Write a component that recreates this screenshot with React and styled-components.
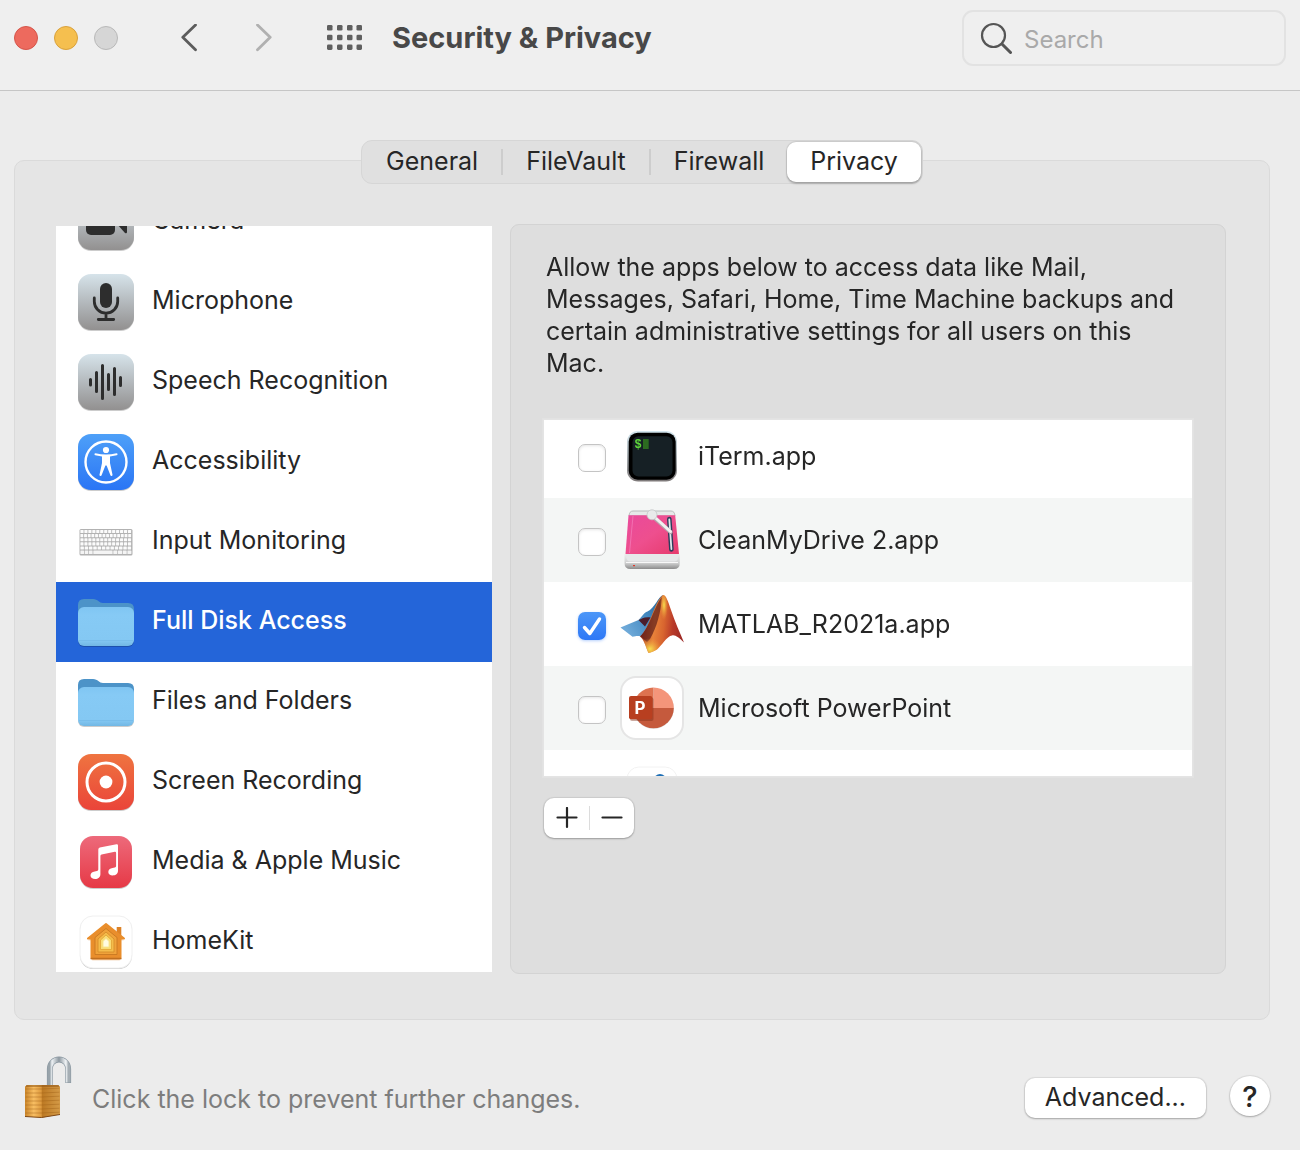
import { useLayoutEffect, useRef, useState } from "react";
import styled, { createGlobalStyle, css } from "styled-components";

const GlobalStyle = createGlobalStyle`
  * {
    box-sizing: border-box;
  }

  body {
    margin: 0;
    background: #ececec;
    color: #262626;
    font-family: Inter, "Liberation Sans", sans-serif;
    font-size: 25px;
  }

  button, input {
    font: inherit;
    color: inherit;
    margin: 0;
  }

  button {
    padding: 0;
    border: none;
    background: none;
  }

  svg {
    display: block;
    flex: none;
  }
`;

const Toolbar = styled.header`
  display: flex;
  align-items: center;
  height: 91px;
  padding: 0 14px 14px;
  background: #efefef;
  border-bottom: 1px solid #c6c6c6;
`;

const Lights = styled.div`
  display: flex;
  gap: 16px;
`;

const Light = styled.button`
  width: 24px;
  height: 24px;
  border-radius: 50%;
  background: ${(props) => props.$color};
  border: 1px solid ${(props) => props.$edge};
`;

const Nav = styled.nav`
  display: flex;
  gap: 35px;
  margin: 0 43px 0 51px;
`;

const NavButton = styled.button`
  display: flex;
  justify-content: center;
  width: 40px;
  color: ${(props) => (props.disabled ? "#b0b0b0" : "#5c5c5c")};
`;

const GridButton = styled.button`
  color: #5f5f5f;
`;

const Title = styled.h1`
  margin: 0 0 0 30px;
  font-size: 29px;
  font-weight: 700;
  line-height: 36px;
  color: #484848;
`;

const SearchBox = styled.label`
  display: flex;
  align-items: center;
  gap: 12px;
  width: 324px;
  height: 56px;
  margin-left: auto;
  padding: 0 16px;
  border: 2px solid #e2e2e2;
  border-radius: 11px;
`;

const SearchInput = styled.input`
  flex: 1;
  min-width: 0;
  padding: 2px 0 0;
  border: none;
  outline: none;
  background: none;
  font-size: 24px;

  &::placeholder {
    color: #a9a9a9;
    opacity: 1;
  }
`;

const Main = styled.main`
  padding: 49px 30px 0 14px;
`;

const Tabs = styled.div`
  position: relative;
  display: flex;
  width: fit-content;
  height: 44px;
  margin: 0 auto -24px;
  padding: 1px;
  background: #e0e0e0;
  border: 1px solid #d6d6d6;
  border-radius: 11px;
`;

const Tab = styled.button`
  display: flex;
  align-items: center;
  height: 40px;
  border-radius: 9px;

  span {
    padding: 0 23px 2px;
    line-height: 24px;
  }

  &:not(:last-child) span {
    border-right: ${(props) => (props.$beforeActive ? "none" : "2px solid #cdcdcd")};
  }

  ${(props) =>
    props.$active &&
    css`
      background: #fff;
      box-shadow: 0 0 1px 1px rgba(0, 0, 0, 0.1), 0 2px 2px rgba(0, 0, 0, 0.2);
    `}
`;

const Pane = styled.section`
  display: flex;
  gap: 18px;
  padding: 63px 43px 45px 41px;
  background: #e5e5e5;
  border: 1px solid #dadada;
  border-radius: 10px;
`;

const Sidebar = styled.ul`
  flex: 0 0 436px;
  height: 746px;
  margin: 2px 0;
  padding: 0;
  list-style: none;
  background: #fff;
  overflow-y: auto;
  scrollbar-width: none;
`;

const Category = styled.button`
  display: flex;
  align-items: center;
  gap: 18px;
  width: 100%;
  height: 80px;
  padding: 0 22px;
  text-align: left;
  background: ${(props) => (props.$active ? "#2465d9" : "transparent")};
  color: ${(props) => (props.$active ? "#fff" : "inherit")};
  font-weight: ${(props) => (props.$active ? 500 : 400)};

  span {
    padding-bottom: 4px;
  }
`;

const Detail = styled.div`
  flex: 1;
  min-width: 0;
  padding: 26px 32px;
  background: #dedede;
  border: 1px solid #d3d3d3;
  border-radius: 9px;
`;

const Description = styled.p`
  margin: 0 0 40px;
  padding-left: 3px;
  line-height: 32px;
`;

const AppList = styled.ul`
  height: 358px;
  margin: 0 0 21px;
  padding: 0;
  list-style: none;
  background: #fff;
  border: 1px solid #e4e4e4;
  box-shadow: 0 0 0 1px #e2e2e2;
  overflow-y: auto;
  scrollbar-width: none;
`;

const AppRow = styled.li`
  display: flex;
  align-items: center;
  height: 84px;
  background: ${(props) => (props.$striped ? "#f4f6f5" : "#fff")};

  label {
    display: flex;
    align-items: center;
    gap: 14px;
    padding-left: 34px;
  }
`;

const CheckCell = styled.span`
  display: grid;
  margin-top: 4px;

  > * {
    grid-area: 1 / 1;
  }

  svg {
    pointer-events: none;
  }
`;

const Checkbox = styled.input`
  appearance: none;
  width: 28px;
  height: 28px;
  background: #fff;
  border: 1px solid #c4c4c4;
  border-radius: 7px;
  box-shadow: inset 0 1px 3px rgba(0, 0, 0, 0.1);

  &:checked {
    background: linear-gradient(#4b96f8, #2e78f6);
    border: none;
    box-shadow: 0 1px 3px rgba(46, 120, 246, 0.35);
  }
`;

const EditButtons = styled.div`
  display: flex;
  align-items: center;
  width: fit-content;
  height: 40px;
  margin-left: 1px;
  background: #fff;
  border-radius: 10px;
  box-shadow: 0 0 1px 1px rgba(0, 0, 0, 0.08), 0 1px 2px rgba(0, 0, 0, 0.25);
`;

const EditButton = styled.button`
  display: flex;
  align-items: center;
  justify-content: center;
  width: 45px;
  height: 24px;

  & + & {
    border-left: 1px solid #dcdcdc;
  }
`;

const Footer = styled.footer`
  display: flex;
  align-items: flex-end;
  gap: 20px;
  padding: 36px 0 32px 10px;
`;

const LockText = styled.span`
  flex: 1;
  line-height: 38px;
  color: #7d7d7d;
`;

const PushButton = styled.button`
  height: 40px;
  padding: 0 20px 2px;
  background: #fff;
  border-radius: 10px;
  box-shadow: 0 0 1px 1px rgba(0, 0, 0, 0.07), 0 1px 2px rgba(0, 0, 0, 0.25);
`;

const HelpButton = styled(PushButton)`
  width: 40px;
  margin: 0 0 2px 4px;
  padding: 0;
  border-radius: 50%;
  font-size: 29px;
  font-weight: 500;
`;

const Glyph = ({ size = 56, children }) => (
  <svg width={size} height={size} viewBox={`0 0 ${size} ${size}`} aria-hidden="true" overflow="visible">
    {children}
  </svg>
);

const Tile = ({ id, from, to, inset = 0, edge = "none" }) => {
  const side = 56 - inset * 2;
  return (
    <>
      <defs>
        <linearGradient id={id} x1="0" y1="0" x2="0" y2="1">
          <stop offset="0" stopColor={from} />
          <stop offset="1" stopColor={to} />
        </linearGradient>
      </defs>
      <rect x={inset} y={inset + 1} width={side} height={side} rx="13" fill="#000" opacity="0.2" />
      <rect x={inset} y={inset} width={side} height={side} rx="13" fill={`url(#${id})`} stroke={edge} />
    </>
  );
};

const CameraIcon = () => (
  <Glyph>
    <Tile id="camera" from="#d6e3ea" to="#929090" />
    <rect x="8" y="16" width="29" height="25" rx="5" fill="#2d2d2d" />
    <path d="M39 30l8-9q2-1 2 1v16q0 2-2 1z" fill="#2d2d2d" />
  </Glyph>
);

const MicrophoneIcon = () => (
  <Glyph>
    <Tile id="mic" from="#d6e3ea" to="#929090" />
    <rect x="22" y="9" width="12" height="25" rx="6" fill="#2d2d2d" />
    <path
      d="M16.3 24v3.5a11.7 11.7 0 0 0 23.4 0V24M28 39.5V45M20.3 45.5h15.4"
      fill="none"
      stroke="#2d2d2d"
      strokeWidth="2.8"
      strokeLinecap="round"
    />
  </Glyph>
);

const SpeechIcon = () => (
  <Glyph>
    <Tile id="speech" from="#d6e3ea" to="#929090" />
    <path
      d="M12.5 25.5v5.5M18.5 18.5v19M24.5 11.5v33M30.5 20.5v15M36.5 14.5v26M42.5 23.5v8"
      stroke="#2d2d2d"
      strokeWidth="3"
      strokeLinecap="round"
    />
  </Glyph>
);

const AccessibilityIcon = () => (
  <Glyph>
    <Tile id="access" from="#4ea0f8" to="#2a75f5" />
    <circle cx="28" cy="28" r="20.5" fill="none" stroke="#fff" strokeWidth="2.4" />
    <circle cx="28" cy="16" r="3.1" fill="#fff" />
    <path
      d="M17.5 19.2q10.5 2.4 21 0q1.2 0 1 1.2q0 .6-.8.8l-6.7 1.3V29l2.5 11.7q.2 1-.8 1.3q-1 .2-1.3-.7L28.6 31.5h-1.2l-3.8 9.8q-.3.9-1.3.7q-1-.3-.8-1.3L24 29v-6.5l-6.7-1.3q-.8-.2-.8-.8q-.2-1.2 1-1.2z"
      fill="#fff"
    />
  </Glyph>
);

const keyRows = [13, 14, 13, 13, 12];
const bottomKeys = [
  [2.4, 3.6],
  [6.7, 3.6],
  [11, 3.6],
  [15.3, 19.3],
  [35.3, 4],
  [40, 4],
  [44.7, 4],
  [49.4, 4],
];

const KeyboardIcon = () => (
  <Glyph>
    <rect x="1.5" y="15" width="53" height="26.5" rx="1.5" fill="#b2b2b2" />
    {keyRows.map((count, row) =>
      Array.from({ length: count }, (_, i) => {
        const step = 51.5 / count;
        return (
          <rect
            key={`${row}-${i}`}
            x={2.4 + i * step}
            y={16 + row * 4.1}
            width={step - 0.8}
            height="3.1"
            rx="0.5"
            fill="#fbfbfb"
          />
        );
      })
    )}
    {bottomKeys.map(([x, width]) => (
      <rect key={x} x={x} y="36.5" width={width} height="3.5" rx="0.5" fill="#f4f4f4" />
    ))}
  </Glyph>
);

const FolderIcon = ({ id }) => (
  <Glyph>
    <defs>
      <linearGradient id={id} x1="0" y1="0" x2="0" y2="1">
        <stop offset="0" stopColor="#7fc5f2" />
        <stop offset="0.2" stopColor="#86caf5" />
        <stop offset="0.85" stopColor="#84c8f3" />
        <stop offset="1" stopColor="#72b7e4" />
      </linearGradient>
    </defs>
    <rect x="0" y="14" width="56" height="39" rx="6" fill="#000" opacity="0.2" />
    <path d="M0 11q0-6 6-6h9c5 0 6 4 10 4h25q6 0 6 6v20H0z" fill="#4c93c8" />
    <rect x="0" y="13" width="56" height="39" rx="6" fill={`url(#${id})`} />
    <path d="M1 46.5h54" stroke="#74b9e6" strokeWidth="0.7" />
  </Glyph>
);

const RecordingIcon = () => (
  <Glyph>
    <Tile id="recording" from="#ef7440" to="#ea4439" />
    <circle cx="28" cy="28" r="19" fill="none" stroke="#fff" strokeWidth="3" />
    <circle cx="28" cy="28" r="6.4" fill="#fff" />
  </Glyph>
);

const MusicIcon = () => (
  <Glyph>
    <Tile id="music" from="#ed6a7b" to="#e63946" inset={2} />
    <path
      d="M20.3 15.5q0-1.5 1.5-1.9l16.7-3.3q1.5-.2 1.5 1.2v25.3c0 3-2.3 4.7-5.3 4.7c-2.6 0-4.4-1.3-4.4-3.4c0-2.3 1.7-3.5 4.2-4l2.3-.5q1.3-.3 1.3-1.7V18.9q0-1.3-1.3-1.1l-13.2 2.7q-1.2.3-1.2 1.5v18.3c0 3-2.3 4.8-5.2 4.8c-2.7 0-4.7-1.4-4.7-3.6c0-2.2 1.6-3.4 4.2-3.9l2.2-.5q1.4-.3 1.4-1.6z"
      fill="#fff"
    />
  </Glyph>
);

const house = "M28 10L10 24.5h3.5V43q0 1.5 1.5 1.5h26q1.5 0 1.5-1.5V24.5H46z";

const HomeIcon = () => (
  <Glyph>
    <Tile id="home" from="#ffffff" to="#ffffff" inset={2} edge="#f0f0f0" />
    <path d={house} fill="#d98a3c" opacity="0.3" transform="translate(0 2)" />
    <path d="M38.7 13h4.6v10h-4.6z" fill="#dc8227" />
    <path d={house} fill="#e98e2c" stroke="#e98e2c" strokeWidth="2" strokeLinejoin="round" />
    <path d="M12.5 44.5h31" stroke="#c06f20" strokeWidth="1.5" />
    {[
      ["M28 14.5L17 23.5V40.5h22V23.5z", "#f0a23a", "#c87821"],
      ["M28 18L20 25V38h16V25z", "#f5bc4b", "#d68d2a"],
      ["M28 21L22.5 26V35.5h11V26z", "#f9dc75", "#e3a83a"],
      ["M28 24.5L25 27.3V33h6V27.3z", "#fffbe0", "#f7e48e"],
    ].map(([d, fill, stroke]) => (
      <path key={d} d={d} fill={fill} stroke={stroke} strokeWidth="0.9" strokeLinejoin="round" />
    ))}
  </Glyph>
);

const ITermIcon = () => (
  <Glyph size={64}>
    <defs>
      <linearGradient id="iterm" x1="0" y1="0" x2="0" y2="1">
        <stop offset="0" stopColor="#d3e6ee" />
        <stop offset="1" stopColor="#7d7878" />
      </linearGradient>
    </defs>
    <rect x="7" y="7" width="50" height="50.5" rx="11" fill="url(#iterm)" />
    <rect x="8.7" y="8.7" width="47" height="47" rx="9" fill="#000" />
    <rect x="12.5" y="12.3" width="40" height="40.3" rx="6" fill="#162025" />
    <text x="14.5" y="24" fontFamily="Liberation Mono, monospace" fontSize="12" fontWeight="700" fill="#5fd83b">
      $
    </text>
    <rect x="23" y="15" width="5.7" height="10" fill="#2c6b20" />
  </Glyph>
);

const CleanMyDriveIcon = () => (
  <Glyph size={64}>
    <defs>
      <linearGradient id="drive" x1="0" y1="0" x2="1" y2="1">
        <stop offset="0" stopColor="#e94a9c" />
        <stop offset="0.5" stopColor="#ee4f8e" />
        <stop offset="1" stopColor="#e63a6c" />
      </linearGradient>
      <linearGradient id="base" x1="0" y1="0" x2="0" y2="1">
        <stop offset="0" stopColor="#eceeee" />
        <stop offset="0.6" stopColor="#cfd0d0" />
        <stop offset="1" stopColor="#8c8c8c" />
      </linearGradient>
    </defs>
    <path d="M9 8q.3-5 4-5h38q3.7 0 4 5z" fill="#e6e9e9" stroke="#b9bcbc" />
    <path d="M4.5 46h55.3v9q0 6-6 6H10.5q-6 0-6-6z" fill="url(#base)" />
    <path d="M6 46h52.5q0 7.5-4 7.5H10q-4 0-4-7.5z" fill="#e6e8e9" />
    <path d="M6 54.5h52" stroke="#f8f8f8" />
    <path d="M8.5 7.3h46.7L59 46H5.5z" fill="url(#drive)" />
    <path d="M13 8L9.5 45" stroke="#f478b6" strokeWidth="0.8" />
    <path d="M49.3 11l2.1 30.5" stroke="#2c3d5c" strokeWidth="4.6" strokeLinecap="round" />
    <path d="M49.3 11.5L51.4 41" stroke="#dfe6ea" strokeWidth="1.8" strokeLinecap="round" />
    <path d="M34 9.5L50.5 24" stroke="#b5a6ad" strokeWidth="4.2" strokeLinecap="round" />
    <path d="M34 8.5l16.5 15" stroke="#f2f0f1" strokeWidth="3" strokeLinecap="round" />
    <circle cx="32" cy="6.8" r="5" fill="#e8eaea" stroke="#c3c6c6" strokeWidth="0.8" />
    <rect x="13" y="57" width="2" height="1.2" fill="#e0392b" />
  </Glyph>
);

const MatlabIcon = () => (
  <Glyph size={64}>
    <defs>
      <linearGradient id="matBlue" x1="0" y1="0.6" x2="1" y2="0">
        <stop offset="0" stopColor="#6ea9d8" />
        <stop offset="0.5" stopColor="#4288c0" />
        <stop offset="1" stopColor="#1f5f92" />
      </linearGradient>
      <linearGradient id="matRed" x1="0" y1="0.3" x2="1" y2="0.4">
        <stop offset="0.05" stopColor="#4d1416" />
        <stop offset="0.32" stopColor="#9c2d1c" />
        <stop offset="0.55" stopColor="#e8823a" />
        <stop offset="0.7" stopColor="#d8652f" />
        <stop offset="0.84" stopColor="#b93a29" />
        <stop offset="1" stopColor="#9e2a26" />
      </linearGradient>
      <radialGradient id="matGlow">
        <stop offset="0" stopColor="#f7df4e" />
        <stop offset="1" stopColor="#ee9a3a" stopOpacity="0" />
      </radialGradient>
      <clipPath id="matClip">
        <path d="M43 3c3 0 5 6 8 15c4 12 9 23 13 32.5c-5-5-9-8-12-7c-5 .5-11 11-15 14c-3 2-6 3-8.5 3.5c-2.5-5-4-13-8.5-16.5C30 36 34 10 43 3z" />
      </clipPath>
    </defs>
    <path
      d="M.5 35.5L18.5 28c5-5 5-7 9-8.5c7-3 11-15 15.5-16.5c-4 10-9 34-22.5 41.5c-3-1-5 0-8 .3z"
      fill="url(#matBlue)"
    />
    <path d="M18.5 28c3-1 6-3.5 12-2.5l-5.5 9z" fill="#4b1d2b" />
    <g clipPath="url(#matClip)">
      <rect width="64" height="64" fill="url(#matRed)" />
      <path d="M20 44C30 36 34 14 42 5c-1 14-5 30-12 42l-3 3z" fill="#521517" opacity="0.65" />
      <ellipse cx="44" cy="13" rx="4" ry="15" fill="url(#matGlow)" />
      <ellipse cx="30" cy="57" rx="12" ry="11" fill="url(#matGlow)" />
    </g>
  </Glyph>
);

const PowerPointIcon = () => (
  <Glyph size={64}>
    <rect x="1" y="1" width="62" height="62" rx="15" fill="#fff" stroke="#e5e5e5" strokeWidth="2" />
    <circle cx="33.5" cy="32.5" r="20.3" fill="#000" opacity="0.15" />
    <path d="M33.5 32V11.5A20.3 20.3 0 0 0 13.2 32z" fill="#dd7250" />
    <path d="M33.5 32V11.5A20.3 20.3 0 0 1 53.8 32z" fill="#f4957a" />
    <path d="M13.2 32a20.3 20.3 0 0 0 40.6 0z" fill="#c55a3d" />
    <rect x="10" y="21.5" width="23.5" height="23.5" rx="2" fill="#7c2a14" opacity="0.4" />
    <rect x="9" y="20" width="23.3" height="23.3" rx="2" fill="#b83f20" />
    <text x="14.5" y="38" fontFamily="Inter, sans-serif" fontSize="17" fontWeight="700" fill="#fff">
      P
    </text>
  </Glyph>
);

const NextAppIcon = () => (
  <Glyph size={64}>
    <rect x="7" y="7" width="50" height="50" rx="12" fill="#fff" stroke="#f2f2f2" />
    <circle cx="40" cy="20" r="6" fill="#1f6fb5" />
  </Glyph>
);

const LockIcon = () => (
  <svg width="48" height="62" viewBox="0 0 48 62" aria-hidden="true">
    <defs>
      <linearGradient id="steel" x1="0" y1="0" x2="1" y2="0">
        <stop offset="0" stopColor="#98a3aa" />
        <stop offset="0.12" stopColor="#eef2f5" />
        <stop offset="0.5" stopColor="#8d98a0" />
        <stop offset="0.88" stopColor="#f3f6f8" />
        <stop offset="1" stopColor="#a5aeb4" />
      </linearGradient>
      <linearGradient id="brass" x1="0" y1="0" x2="1" y2="0">
        <stop offset="0" stopColor="#c98429" />
        <stop offset="0.25" stopColor="#f8be62" />
        <stop offset="0.46" stopColor="#dd9a3f" />
        <stop offset="0.5" stopColor="#bd7a24" />
        <stop offset="1" stopColor="#d49a47" />
      </linearGradient>
    </defs>
    <path d="M25.8 30V12.7a9.2 9.2 0 0 1 18.4 0V27" fill="none" stroke="#8996a0" strokeWidth="5.8" />
    <path d="M25.8 30V12.7a9.2 9.2 0 0 1 18.4 0v13.8" fill="none" stroke="url(#steel)" strokeWidth="4.6" />
    <path d="M1 30.5L3 29h31l2 1.5v28l-18.5 3.2L1 60.5z" fill="url(#brass)" />
    {[33, 37, 41, 45, 49, 53, 57].map((y) => (
      <path key={y} d={`M1.5 ${y}h16l18-.8`} fill="none" stroke="#9c5c15" strokeWidth="0.8" opacity="0.5" />
    ))}
    <path d="M2 30h33" stroke="#8b5316" />
    <path d="M1 60.5l16.5 1L36 58.5" fill="none" stroke="#7d4715" />
  </svg>
);

const categories = [
  { name: "Camera", icon: <CameraIcon /> },
  { name: "Microphone", icon: <MicrophoneIcon /> },
  { name: "Speech Recognition", icon: <SpeechIcon /> },
  { name: "Accessibility", icon: <AccessibilityIcon /> },
  { name: "Input Monitoring", icon: <KeyboardIcon /> },
  { name: "Full Disk Access", icon: <FolderIcon id="diskFolder" /> },
  { name: "Files and Folders", icon: <FolderIcon id="filesFolder" /> },
  { name: "Screen Recording", icon: <RecordingIcon /> },
  { name: "Media & Apple Music", icon: <MusicIcon /> },
  { name: "HomeKit", icon: <HomeIcon /> },
];

const apps = [
  { name: "iTerm.app", icon: <ITermIcon /> },
  { name: "CleanMyDrive 2.app", icon: <CleanMyDriveIcon /> },
  { name: "MATLAB_R2021a.app", icon: <MatlabIcon /> },
  { name: "Microsoft PowerPoint", icon: <PowerPointIcon /> },
  { name: "", icon: <NextAppIcon /> },
];

const tabs = ["General", "FileVault", "Firewall", "Privacy"];

const App = () => {
  const [tab, setTab] = useState("Privacy");
  const [category, setCategory] = useState("Full Disk Access");
  const [allowed, setAllowed] = useState(["MATLAB_R2021a.app"]);
  const [query, setQuery] = useState("");
  const sidebarRef = useRef(null);
  const appsRef = useRef(null);

  // both lists open slightly scrolled
  useLayoutEffect(() => {
    sidebarRef.current.scrollTop = 44;
    appsRef.current.scrollTop = 6;
  }, []);

  const toggle = (name) => {
    setAllowed(allowed.includes(name) ? allowed.filter((a) => a !== name) : [...allowed, name]);
  };

  return (
    <>
      <GlobalStyle />
      <Toolbar>
        <Lights>
          <Light $color="#ed6a5e" $edge="#d5554a" aria-label="Close" />
          <Light $color="#f5bf4f" $edge="#d9a13c" aria-label="Minimize" />
          <Light $color="#d6d6d6" $edge="#b9b9b9" aria-label="Zoom" />
        </Lights>
        <Nav>
          <NavButton aria-label="Back">
            <svg width="16" height="28" viewBox="0 0 16 28">
              <path
                d="M14.5 1L1.8 13.3l12.7 12.5"
                fill="none"
                stroke="currentColor"
                strokeWidth="2.8"
                strokeLinecap="round"
                strokeLinejoin="round"
              />
            </svg>
          </NavButton>
          <NavButton aria-label="Forward" disabled>
            <svg width="16" height="28" viewBox="0 0 16 28">
              <path
                d="M1.5 1l12.7 12.3L1.5 25.8"
                fill="none"
                stroke="currentColor"
                strokeWidth="2.8"
                strokeLinecap="round"
                strokeLinejoin="round"
              />
            </svg>
          </NavButton>
        </Nav>
        <GridButton aria-label="Show All">
          <svg width="35" height="26" viewBox="0 0 35 26">
            {[0, 9.7, 19.4].map((y) =>
              [0, 10, 20, 29.5].map((x) => (
                <rect key={`${x}-${y}`} x={x} y={y} width="5.5" height="5.5" rx="1.3" fill="currentColor" />
              ))
            )}
          </svg>
        </GridButton>
        <Title>Security &amp; Privacy</Title>
        <SearchBox>
          <svg width="32" height="32" viewBox="0 0 32 32" aria-hidden="true">
            <circle cx="13.5" cy="13.5" r="11.5" fill="none" stroke="#555" strokeWidth="2.2" />
            <path d="M22 22l8.5 8.5" stroke="#555" strokeWidth="3" strokeLinecap="round" />
          </svg>
          <SearchInput
            placeholder="Search"
            aria-label="Search"
            value={query}
            onChange={(e) => setQuery(e.target.value)}
          />
        </SearchBox>
      </Toolbar>

      <Main>
        <Tabs role="tablist">
          {tabs.map((name, i) => (
            <Tab
              key={name}
              role="tab"
              aria-selected={tab === name}
              $active={tab === name}
              $beforeActive={tab === name || tabs[i + 1] === tab}
              onClick={() => setTab(name)}
            >
              <span>{name}</span>
            </Tab>
          ))}
        </Tabs>
        <Pane>
          <Sidebar ref={sidebarRef}>
            {categories.map(({ name, icon }) => (
              <li key={name}>
                <Category $active={category === name} onClick={() => setCategory(name)}>
                  {icon}
                  <span>{name}</span>
                </Category>
              </li>
            ))}
          </Sidebar>
          <Detail>
            <Description>
              Allow the apps below to access data like Mail, Messages, Safari, Home, Time Machine backups and certain
              administrative settings for all users on this Mac.
            </Description>
            <AppList ref={appsRef}>
              {apps.map(({ name, icon }, i) => (
                <AppRow key={name} $striped={i % 2 === 1}>
                  <label>
                    <CheckCell>
                      <Checkbox type="checkbox" checked={allowed.includes(name)} onChange={() => toggle(name)} />
                      {allowed.includes(name) && (
                        <svg width="28" height="28" viewBox="0 0 28 28">
                          <path
                            d="M6.5 15.5l5.3 6L21.5 7"
                            fill="none"
                            stroke="#fff"
                            strokeWidth="3.4"
                            strokeLinecap="round"
                            strokeLinejoin="round"
                          />
                        </svg>
                      )}
                    </CheckCell>
                    {icon}
                    <span>{name}</span>
                  </label>
                </AppRow>
              ))}
            </AppList>
            <EditButtons>
              <EditButton aria-label="Add">
                <svg width="22" height="22" viewBox="0 0 22 22">
                  <path d="M1.5 10.5h19M11 1v19" stroke="#262626" strokeWidth="2.2" strokeLinecap="round" />
                </svg>
              </EditButton>
              <EditButton aria-label="Remove">
                <svg width="22" height="22" viewBox="0 0 22 22">
                  <path d="M1.5 10.5h19" stroke="#262626" strokeWidth="2.2" strokeLinecap="round" />
                </svg>
              </EditButton>
            </EditButtons>
          </Detail>
        </Pane>
        <Footer>
          <button aria-label="Lock">
            <LockIcon />
          </button>
          <LockText>Click the lock to prevent further changes.</LockText>
          <PushButton>Advanced...</PushButton>
          <HelpButton aria-label="Help">?</HelpButton>
        </Footer>
      </Main>
    </>
  );
};

export default App;
